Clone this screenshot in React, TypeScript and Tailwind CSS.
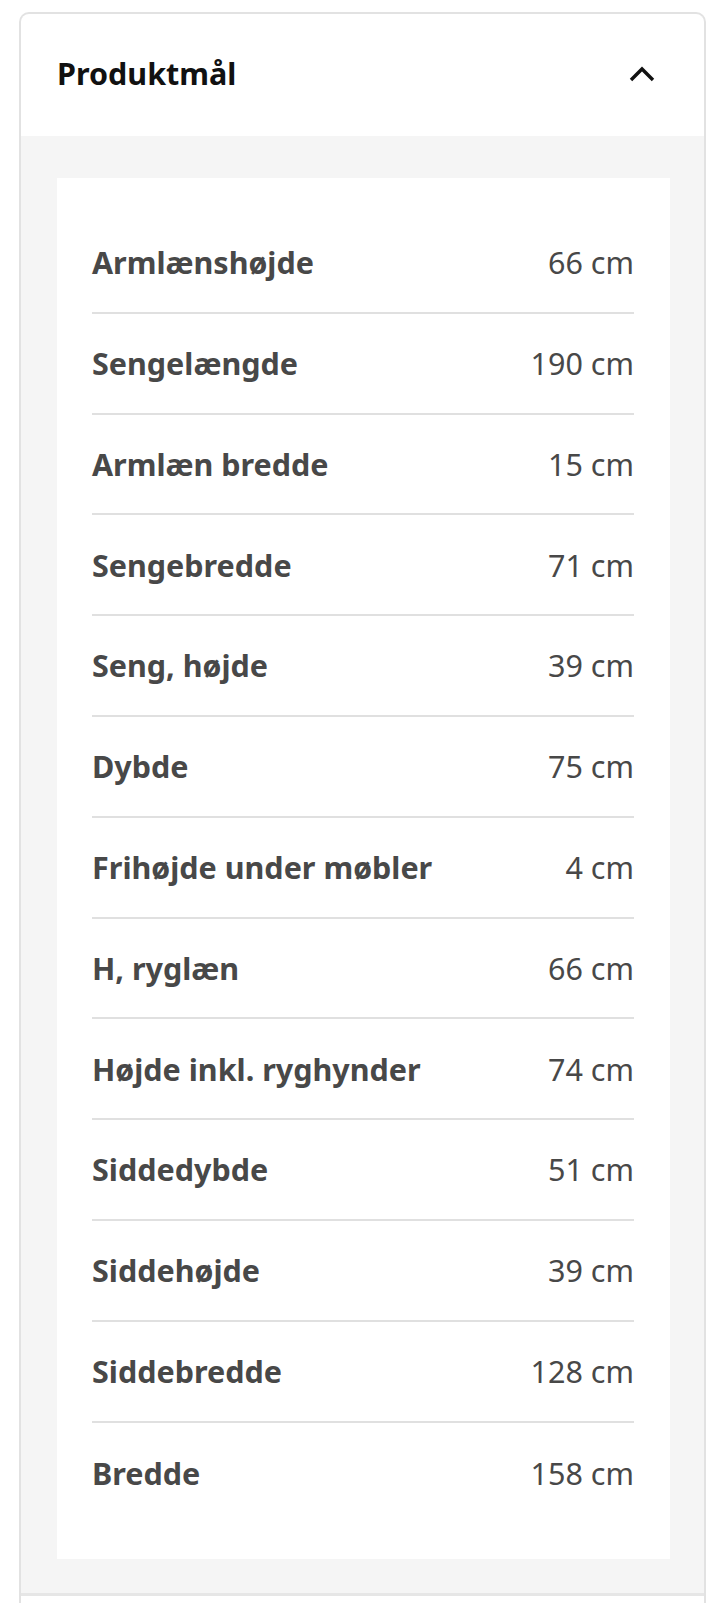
import React from "react";

const rows: [string, string][] = [
  ["Armlænshøjde", "66 cm"],
  ["Sengelængde", "190 cm"],
  ["Armlæn bredde", "15 cm"],
  ["Sengebredde", "71 cm"],
  ["Seng, højde", "39 cm"],
  ["Dybde", "75 cm"],
  ["Frihøjde under møbler", "4 cm"],
  ["H, ryglæn", "66 cm"],
  ["Højde inkl. ryghynder", "74 cm"],
  ["Siddedybde", "51 cm"],
  ["Siddehøjde", "39 cm"],
  ["Siddebredde", "128 cm"],
  ["Bredde", "158 cm"],
];

export default function App() {
  return (
    <div
      className="min-h-[1603px] bg-white pt-[12px] pl-[19px]"
      style={{ fontFamily: '"Noto Sans", "Open Sans", sans-serif' }}
    >
      <div className="w-[687px] rounded-t-[10px] border-2 border-b-0 border-[#e2e2e2] bg-white">
        <div className="flex h-[122px] items-center justify-between pb-[4px] pl-[36px] pr-[49px]">
          <h2 className="text-[30.5px] font-bold leading-none text-[#111111]">Produktmål</h2>
          <svg width="26" height="17" viewBox="0 0 26 17" fill="none">
            <path d="M2 15 L13 4 L24 15" stroke="#111111" strokeWidth="3.4" />
          </svg>
        </div>
        <div className="bg-[#f5f5f5] pl-[36px] pr-[34px] pt-[42px] pb-[34px]">
          <div className="bg-white pl-[35px] pr-[36px] pt-[35px] pb-[36px]">
            {rows.map(([label, value], i) => (
              <div
                key={label}
                className={
                  "flex h-[100.8px] items-center justify-between " +
                  (i < rows.length - 1 ? "border-b-2 border-[#e0e0e0]" : "")
                }
              >
                <span className="text-[30.5px] font-bold leading-none text-[#484848]">{label}</span>
                <span className="text-[30.5px] font-normal leading-none text-[#484848]">{value}</span>
              </div>
            ))}
          </div>
        </div>
        <div className="h-[60px] border-t-[3px] border-[#e6e6e6] bg-white" />
      </div>
    </div>
  );
}
